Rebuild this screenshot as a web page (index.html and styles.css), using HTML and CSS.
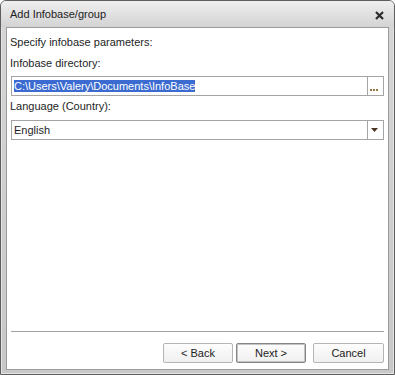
FILE: index.html
```html
<!DOCTYPE html>
<html lang="en">
<head>
    <meta charset="UTF-8">
    <title>Add Infobase/group</title>
    <link rel="stylesheet" href="styles.css">
</head>
<body>
    <div class="window">
        <div class="titlebar">
            <span class="title">Add Infobase/group</span>
            <span class="close">
                <svg width="9" height="9" viewBox="0 0 9 9">
                    <path d="M1 1 L8 8 M8 1 L1 8" stroke="#2b2b2b" stroke-width="2.2" fill="none"/>
                </svg>
            </span>
        </div>

        <div class="client">
            <div class="form">
                <div class="label">Specify infobase parameters:</div>
                <div class="label spaced">Infobase directory:</div>
                <div class="field">
                    <div class="field-value"><span class="selected">C:\Users\Valery\Documents\InfoBase</span></div>
                    <div class="field-btn">
                        <svg width="15" height="18" viewBox="0 0 15 18" shape-rendering="crispEdges">
                            <rect x="2" y="12" width="2" height="2" fill="#9a7643"/>
                            <rect x="5" y="12" width="2" height="2" fill="#9a7643"/>
                            <rect x="8" y="12" width="2" height="2" fill="#9a7643"/>
                        </svg>
                    </div>
                </div>
                <div class="label tight">Language (Country):</div>
                <div class="field combo">
                    <div class="field-value">English</div>
                    <div class="field-btn">
                        <svg width="15" height="18" viewBox="0 0 15 18">
                            <polygon points="3,7 10,7 6.5,11" fill="#4b3422"/>
                        </svg>
                    </div>
                </div>
            </div>

            <div class="footer">
                <div class="separator"></div>
                <div class="buttons">
                    <button class="btn btn-back">&lt; Back</button>
                    <button class="btn btn-next">Next &gt;</button>
                    <button class="btn btn-cancel">Cancel</button>
                </div>
            </div>
        </div>
    </div>
</body>
</html>
```

FILE: styles.css
```css
* {
    box-sizing: border-box;
    margin: 0;
    padding: 0;
}
body {
    font-family: 'Liberation Sans', Arial, sans-serif;
    font-size: 11px;
    color: #1e1e1e;
    background: #fff;
}
.window {
    width: 395px;
    height: 375px;
    border: 1px solid #5e5e5e;
    border-radius: 6px 6px 0 0;
    background: linear-gradient(#d6d6d6, #c8c8c8);
    box-shadow: inset 0 0 0 1px #e4e4e4;
    display: flex;
    flex-direction: column;
    padding: 0 5px 4px;
}
.titlebar {
    height: 26px;
    margin: 0 -5px;
    padding: 0 10px 0 9px;
    display: flex;
    align-items: center;
    justify-content: space-between;
    background: linear-gradient(#efefef, #d3d3d3);
    border-radius: 5px 5px 0 0;
}
.title {
    line-height: 13px;
    color: #222;
    padding-top: 1px;
}
.close {
    display: flex;
    margin-top: 2px;
}
.client {
    flex: 1;
    background: #fff;
    border: 1px solid #9b9b9b;
    display: flex;
    flex-direction: column;
    justify-content: space-between;
    padding: 7px 4px 6px;
}
.label {
    line-height: 14px;
    margin-left: -1px;
}
.label.spaced {
    margin-top: 7px;
}
.label.tight {
    margin-top: 3px;
}
.field {
    display: flex;
    height: 20px;
    border: 1px solid #a5a5a5;
    margin-top: 6px;
}
.field.combo {
    margin-top: 7px;
}
.field-value {
    flex: 1;
    line-height: 18px;
    padding-left: 2px;
    white-space: nowrap;
    overflow: hidden;
}
.selected {
    background: #3b6bd0;
    color: #fff;
}
.field-btn {
    width: 16px;
    border-left: 1px solid #a5a5a5;
    display: flex;
}
.separator {
    height: 1px;
    background: #a0a0a0;
}
.buttons {
    display: flex;
    justify-content: flex-end;
    margin-top: 11px;
}
.btn {
    height: 20px;
    width: 70px;
    font-family: 'Liberation Sans', Arial, sans-serif;
    font-size: 11px;
    line-height: 18px;
    color: #222;
    border: 1px solid #b4b4b4;
    border-radius: 2px;
    background: linear-gradient(#fdfdfd, #f0f0f0);
}
.btn-next {
    margin-left: 3px;
    border-color: #858585;
    box-shadow: inset 0 0 0 1px #c4c4c4;
}
.btn-cancel {
    width: 71px;
    margin-left: 7px;
}
```
